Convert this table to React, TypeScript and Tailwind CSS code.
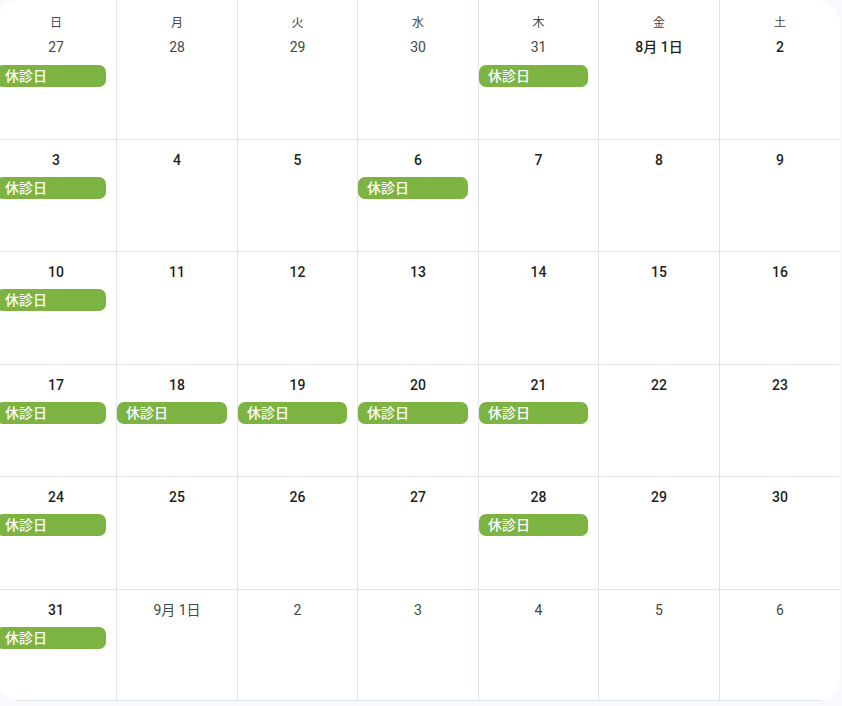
const weekdays = ["日", "月", "火", "水", "木", "金", "土"];

type Day = { label: string; muted?: boolean; closed?: boolean };

const weeks: Day[][] = [
  [
    { label: "27", muted: true, closed: true },
    { label: "28", muted: true },
    { label: "29", muted: true },
    { label: "30", muted: true },
    { label: "31", muted: true, closed: true },
    { label: "8月 1日" },
    { label: "2" },
  ],
  [
    { label: "3", closed: true },
    { label: "4" },
    { label: "5" },
    { label: "6", closed: true },
    { label: "7" },
    { label: "8" },
    { label: "9" },
  ],
  [
    { label: "10", closed: true },
    { label: "11" },
    { label: "12" },
    { label: "13" },
    { label: "14" },
    { label: "15" },
    { label: "16" },
  ],
  [
    { label: "17", closed: true },
    { label: "18", closed: true },
    { label: "19", closed: true },
    { label: "20", closed: true },
    { label: "21", closed: true },
    { label: "22" },
    { label: "23" },
  ],
  [
    { label: "24", closed: true },
    { label: "25" },
    { label: "26" },
    { label: "27" },
    { label: "28", closed: true },
    { label: "29" },
    { label: "30" },
  ],
  [
    { label: "31", closed: true },
    { label: "9月 1日", muted: true },
    { label: "2", muted: true },
    { label: "3", muted: true },
    { label: "4", muted: true },
    { label: "5", muted: true },
    { label: "6", muted: true },
  ],
];

const rowHeights = ["h-[140px]", "h-[112px]", "h-[113px]", "h-[112px]", "h-[113px]", "h-[111px]"];

const Cell = ({ day, col, row }: { day: Day; col: number; row: number }) => {
  return (
    <div
      className={`flex flex-col items-center border-b border-[#dfe3ea] ${
        col < 6 ? "border-r" : ""
      } ${rowHeights[row]}`}
    >
      {row === 0 && (
        <p className="pt-[15px] text-[12px] leading-[16px] text-[#444746]">{weekdays[col]}</p>
      )}
      <p
        className={`${row === 0 ? "pt-[7px]" : "pt-[11px]"} text-[14px] leading-[18px] ${
          day.muted ? "text-[#444746] font-normal" : "text-[#1f1f1f] font-medium"
        }`}
      >
        {day.label}
      </p>
      {day.closed && (
        <div
          className={`${
            row === 0 ? "mt-[9px]" : "mt-[8px]"
          } self-start w-[calc(100%-10px)] h-[22px] rounded-[7px] bg-[#7cb342] pl-[9px] text-[14px] leading-[22px] font-medium text-white`}
        >
          休診日
        </div>
      )}
    </div>
  );
};

const App = () => {
  return (
    <div
      className="w-[842px] h-[706px] bg-[#f8f9fc] overflow-hidden"
      style={{ fontFamily: 'Roboto, "Noto Sans CJK JP", sans-serif' }}
    >
      <div className="ml-[-4px] w-[844px] bg-white rounded-[24px] overflow-hidden">
        <div className="grid grid-cols-[121px_121px_120px_121px_120px_121px_120px]">
          {weeks.map((week, r) =>
            week.map((day, c) => <Cell key={`${r}-${c}`} day={day} col={c} row={r} />)
          )}
        </div>
      </div>
    </div>
  );
};

export default App;
